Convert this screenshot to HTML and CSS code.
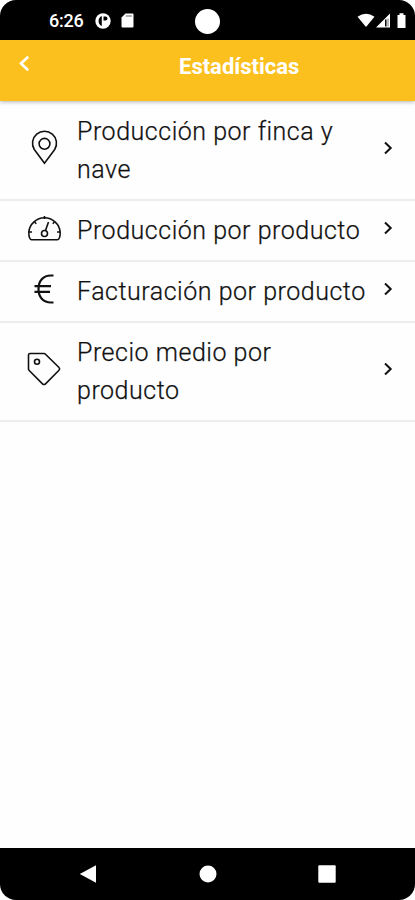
FILE: index.html
```html
<!DOCTYPE html>
<html lang="es">
<head>
<meta charset="utf-8">
<title>Estadísticas</title>
<link rel="stylesheet" href="styles.css">
</head>
<body>
<div class="phone">
  <div class="status">
    <span class="time">6:26</span>
    <svg class="app-icon" width="16" height="16" viewBox="0 0 16 16"><circle cx="8" cy="8" r="7.7" fill="#fff"/><path d="M6.800 3A5.500 5.500 0 0 0 6.800 13ZM8.500 3.500H10.500A2 2 0 0 1 10.500 7.500H8.500Z" fill="#000"/></svg>
    <svg class="sd-icon" width="13" height="15" viewBox="0 0 13 15"><path d="M4.500 .5H11.500Q12.500 .5 12.500 1.500V13.500Q12.500 14.500 11.500 14.500H1.500Q.5 14.500 .5 13.500V4.500Z" fill="#fff"/><path d="M4.800 3H11" stroke="#999" stroke-width="1.500"/></svg>
    <span class="camera"></span>
    <svg class="signals" width="50" height="16" viewBox="0 0 50 16"><path d="M.5 3.800Q9 -2.300 17.500 3.800L9 14Z" fill="#fff"/><path d="M19 14.500L33 .5V14.500Z" fill="#fff"/><path d="M28.800 6.500V13.500" stroke="#000" stroke-width="1.500"/><path d="M31 5.500V13.500" stroke="#777" stroke-width="1"/><path d="M40.500 2H42.500V.3H46.500V2H48.500V15H40.500Z" fill="#fff"/></svg>
  </div>
  <header class="header">
    <svg class="back" width="12" height="17" viewBox="0 0 12 17"><path d="M10.200 1.800L3 8.500L10.200 15.200" fill="none" stroke="#fff" stroke-width="2.600"/></svg>
    <h1>Estadísticas</h1>
  </header>
  <main class="list">
    <div class="row">
      <svg class="icon" width="36" height="36" viewBox="0 0 36 36"><path d="M18.500 33.200L8.300 19.500A12 12 0 1 1 28.700 19.500Z"/><circle cx="18.500" cy="13.800" r="5.400"/></svg>
      <span class="label">Producción por finca y nave</span>
      <svg class="chevron" width="10" height="14" viewBox="0 0 10 14"><path d="M2 1.500L7.700 7L2 12.500"/></svg>
    </div>
    <div class="row single">
      <svg class="icon" width="36" height="36" viewBox="0 0 36 36"><path d="M5.500 29.800Q2.800 29.300 2.800 22A15.800 16 0 0 1 34.200 22Q34.200 29.300 31.500 29.800Z"/><circle cx="18.500" cy="23.500" r="3"/><path d="M19.500 20.500L22.500 12M18.500 6V9M8.500 12L10.300 13.800M28.500 12L26.700 13.800M3 22H6M31 22H34"/></svg>
      <span class="label">Producción por producto</span>
      <svg class="chevron" width="10" height="14" viewBox="0 0 10 14"><path d="M2 1.500L7.700 7L2 12.500"/></svg>
    </div>
    <div class="row single">
      <svg class="icon euro" width="36" height="36" viewBox="0 0 36 36"><path d="M27.500 4.500H25C17 4.500 12.500 10 12.500 18S17 31.500 25 31.500H27.500M8.500 15.200H25M8.500 20.800H24"/></svg>
      <span class="label">Facturación por producto</span>
      <svg class="chevron" width="10" height="14" viewBox="0 0 10 14"><path d="M2 1.500L7.700 7L2 12.500"/></svg>
    </div>
    <div class="row">
      <svg class="icon" width="36" height="36" viewBox="0 0 36 36"><path d="M4 2.500H18Q18.800 2.500 19.500 3.200L33 16.500Q34.300 18 33 19.300L19.500 32.800Q18 34.200 16.500 32.800L3.200 19.500Q2.500 18.800 2.500 18V4Q2.500 2.500 4 2.500Z"/><circle cx="11" cy="10.800" r="2.500"/></svg>
      <span class="label">Precio medio por producto</span>
      <svg class="chevron" width="10" height="14" viewBox="0 0 10 14"><path d="M2 1.500L7.700 7L2 12.500"/></svg>
    </div>
  </main>
  <nav class="nav">
    <svg width="18" height="20" viewBox="0 0 18 20"><path d="M.8 10L17 1.200V18.800Z" fill="#fff"/></svg>
    <svg width="18" height="18" viewBox="0 0 18 18"><circle cx="9" cy="9" r="8.500" fill="#fff"/></svg>
    <svg width="18" height="18" viewBox="0 0 18 18"><rect x=".3" y=".3" width="17.400" height="17.400" rx="1" fill="#fff"/></svg>
  </nav>
</div>
</body>
</html>
```
FILE: styles.css
```css
* { box-sizing: border-box; }
body { margin: 0; background: #fff; font-family: Roboto, sans-serif; }
.phone { width: 415px; height: 900px; display: flex; flex-direction: column; border-radius: 16px; overflow: hidden; background: #fefefe; }
.status { height: 39.5px; flex: none; background: #000; display: flex; align-items: center; padding: 2px 8px 0 49px; }
.time { width: 46px; color: #fff; font-size: 18px; font-weight: 500; line-height: 20px; letter-spacing: -0.2px; }
.app-icon { flex: none; }
.sd-icon { margin-left: 10px; flex: none; }
.camera { width: 25px; height: 25px; margin: 2px 0 0 61px; border-radius: 50%; background: #fff; flex: none; }
.signals { margin-left: auto; flex: none; }
.header { height: 61.5px; flex: none; display: flex; align-items: flex-start; background: #fcc01e; padding: 15px 0 0 18px; box-shadow: 0 1px 4px rgba(0, 0, 0, 0.3); position: relative; }
.back { flex: none; }
h1 { margin: 0 0 0 149px; color: #fff; font-size: 22px; line-height: 24px; font-weight: 700; }
.list { flex: 1; padding-top: 1px; }
.row { min-height: 61px; display: flex; align-items: center; padding: 10.5px 22px 10.5px 26px; border-bottom: 2px solid #ededed; }
.icon, .chevron { flex: none; fill: none; stroke: #111; stroke-width: 1.6; margin-top: -6px; }
.euro { stroke-width: 2.2; }
.label { flex: 1; margin: 0 10px 0 15px; color: #111; font-size: 25px; font-weight: 300; line-height: 38px; letter-spacing: 0.52px; -webkit-text-stroke: 0.25px #111; }
.chevron { stroke-width: 2; }
.single .label { white-space: nowrap; min-width: 0; }
.nav { height: 52.5px; flex: none; display: flex; align-items: center; justify-content: space-between; padding: 0 79px; background: #000; }
```
